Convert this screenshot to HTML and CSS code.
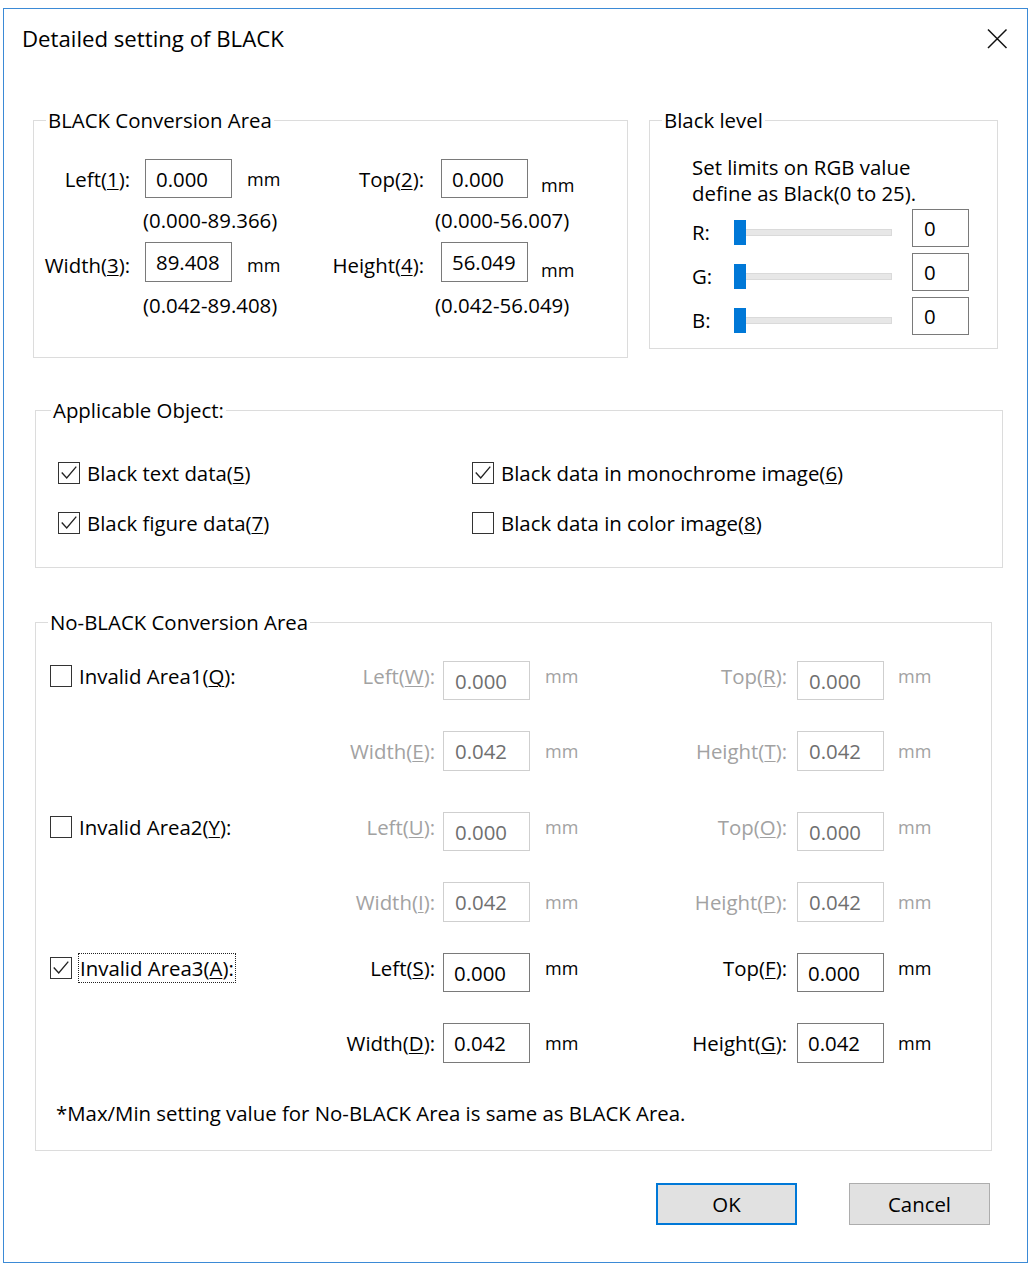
FILE: index.html
```html
<!DOCTYPE html>
<html>
<head>
<meta charset="utf-8">
<title>Detailed setting of BLACK</title>
<link rel="stylesheet" href="styles.css">
</head>
<body>
<div class="window">
  <div class="titlebar">
    <span class="title">Detailed setting of BLACK</span>
    <span class="close">
      <svg width="22" height="22" viewBox="0 0 22 22"><path d="M2 1.5 L20.5 20 M20.5 1.5 L2 20" stroke="#111" stroke-width="1.5" fill="none"/></svg>
    </span>
  </div>
  <div class="content">
    <div class="top-row">
      <fieldset class="group g-black">
        <legend>BLACK Conversion Area</legend>
        <div class="bc-grid">
          <span class="lbl r1">Left(<u>1</u>):</span>
          <span class="input">0.000</span>
          <span class="unit u1">mm</span>
          <span class="lbl r1 lr">Top(<u>2</u>):</span>
          <span class="input">0.000</span>
          <span class="unit u2">mm</span>

          <span class="range rg1">(0.000-89.366)</span>
          <span class="range rg2">(0.000-56.007)</span>

          <span class="lbl r3">Width(<u>3</u>):</span>
          <span class="input">89.408</span>
          <span class="unit u3">mm</span>
          <span class="lbl r3 lr">Height(<u>4</u>):</span>
          <span class="input">56.049</span>
          <span class="unit u4">mm</span>

          <span class="range rg1">(0.042-89.408)</span>
          <span class="range rg2">(0.042-56.049)</span>
        </div>
      </fieldset>
      <fieldset class="group g-level">
        <legend>Black level</legend>
        <p class="level-text">Set limits on RGB value<br>define as Black(0 to 25).</p>
        <div class="slider-grid">
          <span class="sl-lbl">R:</span>
          <span class="slider"><span class="track"></span><span class="thumb"></span></span>
          <span class="input small">0</span>
          <span class="sl-lbl">G:</span>
          <span class="slider"><span class="track"></span><span class="thumb"></span></span>
          <span class="input small">0</span>
          <span class="sl-lbl">B:</span>
          <span class="slider"><span class="track"></span><span class="thumb"></span></span>
          <span class="input small">0</span>
        </div>
      </fieldset>
    </div>

    <fieldset class="group g-apply">
      <legend>Applicable Object:</legend>
      <div class="apply-grid">
        <label class="chk"><span class="box"><svg viewBox="0 0 22 22"><path d="M3 10.5 L8.5 16.5 L19 4" stroke="#222" stroke-width="1.5" fill="none"/></svg></span><span>Black text data(<u>5</u>)</span></label>
        <label class="chk"><span class="box"><svg viewBox="0 0 22 22"><path d="M3 10.5 L8.5 16.5 L19 4" stroke="#222" stroke-width="1.5" fill="none"/></svg></span><span>Black data in monochrome image(<u>6</u>)</span></label>
        <label class="chk"><span class="box"><svg viewBox="0 0 22 22"><path d="M3 10.5 L8.5 16.5 L19 4" stroke="#222" stroke-width="1.5" fill="none"/></svg></span><span>Black figure data(<u>7</u>)</span></label>
        <label class="chk"><span class="box"></span><span>Black data in color image(<u>8</u>)</span></label>
      </div>
    </fieldset>

    <fieldset class="group g-noblack">
      <legend>No-BLACK Conversion Area</legend>

      <div class="area-grid">
        <label class="chk arow1"><span class="box"></span><span>Invalid Area1(<u>Q</u>):</span></label>
        <span class="lbl dis arow1">Left(<u>W</u>):</span>
        <span class="input dis">0.000</span>
        <span class="unit dis arow1 pad">mm</span>
        <span class="lbl dis arow1 pr2">Top(<u>R</u>):</span>
        <span class="input dis">0.000</span>
        <span class="unit dis arow1 pad2">mm</span>

        <span class="spacer"></span>
        <span class="lbl dis">Width(<u>E</u>):</span>
        <span class="input dis">0.042</span>
        <span class="unit dis pad">mm</span>
        <span class="lbl dis pr2">Height(<u>T</u>):</span>
        <span class="input dis">0.042</span>
        <span class="unit dis pad2">mm</span>
      </div>

      <div class="area-grid a2">
        <label class="chk arow1"><span class="box"></span><span>Invalid Area2(<u>Y</u>):</span></label>
        <span class="lbl dis arow1">Left(<u>U</u>):</span>
        <span class="input dis">0.000</span>
        <span class="unit dis arow1 pad">mm</span>
        <span class="lbl dis arow1 pr2">Top(<u>O</u>):</span>
        <span class="input dis">0.000</span>
        <span class="unit dis arow1 pad2">mm</span>

        <span class="spacer"></span>
        <span class="lbl dis">Width(<u>I</u>):</span>
        <span class="input dis">0.042</span>
        <span class="unit dis pad">mm</span>
        <span class="lbl dis pr2">Height(<u>P</u>):</span>
        <span class="input dis">0.042</span>
        <span class="unit dis pad2">mm</span>
      </div>

      <div class="area-grid a3">
        <label class="chk arow1"><span class="box"><svg viewBox="0 0 22 22"><path d="M3 10.5 L8.5 16.5 L19 4" stroke="#222" stroke-width="1.5" fill="none"/></svg></span><span class="focus">Invalid Area3(<u>A</u>):</span></label>
        <span class="lbl arow1">Left(<u>S</u>):</span>
        <span class="input">0.000</span>
        <span class="unit arow1 pad">mm</span>
        <span class="lbl arow1 pr2">Top(<u>F</u>):</span>
        <span class="input">0.000</span>
        <span class="unit arow1 pad2">mm</span>

        <span class="spacer"></span>
        <span class="lbl">Width(<u>D</u>):</span>
        <span class="input">0.042</span>
        <span class="unit pad">mm</span>
        <span class="lbl pr2">Height(<u>G</u>):</span>
        <span class="input">0.042</span>
        <span class="unit pad2">mm</span>
      </div>

      <p class="note">*Max/Min setting value for No-BLACK Area is same as BLACK Area.</p>
    </fieldset>

    <div class="buttons">
      <button class="btn default">OK</button>
      <button class="btn">Cancel</button>
    </div>
  </div>
</div>
</body>
</html>
```

FILE: styles.css
```css
* { box-sizing: border-box; }

html, body {
  margin: 0;
  padding: 0;
  background: #ffffff;
}

body {
  font-family: "Open Sans", "Noto Sans", sans-serif;
  font-size: 20.4px;
  color: #000;
  line-height: 28px;
}

u {
  text-decoration-thickness: 1px;
  text-underline-offset: 2px;
}

.window {
  margin: 8px 0 0 3px;
  width: 1025px;
  border: 1px solid #3b8ad6;
  background: #fff;
}

.titlebar {
  height: 60px;
  display: flex;
  align-items: center;
  justify-content: space-between;
  padding: 0 19px 0 18px;
}

.title {
  font-size: 22.2px;
}

.close {
  display: flex;
  width: 22px;
  height: 22px;
}

.content {
  padding: 37px 0 37px 29px;
}

.top-row {
  display: flex;
  align-items: flex-start;
  gap: 21px;
}

.group {
  margin: 0;
  padding: 0;
  border: 1px solid #dcdcdc;
  min-width: 0;
}

.group legend {
  padding: 0 2px;
  margin-left: 12px;
  line-height: 28px;
}

/* BLACK Conversion Area */
.g-black {
  width: 595px;
  height: 252px;
}

.bc-grid {
  display: grid;
  grid-template-columns: 111px 87px 95px 114px 87px 1fr;
  grid-template-rows: 39px 44px 40px 46px;
  padding-top: 25px;
}

.lbl {
  text-align: right;
  white-space: nowrap;
  align-self: center;
}

.bc-grid .lbl { padding-right: 15px; }
.bc-grid .lbl.lr { padding-right: 17px; }
.bc-grid .r3 { padding-top: 6px; }

.unit {
  font-size: 18px;
  align-self: center;
  white-space: nowrap;
}

.u1 { padding-left: 15px; }
.u2 { padding-left: 13px; padding-top: 12px; }
.u3 { padding-left: 15px; padding-top: 6px; }
.u4 { padding-left: 13px; padding-top: 16px; }

.range {
  white-space: nowrap;
  align-self: center;
}

.rg1 { grid-column: 2 / span 3; margin-left: -2px; }
.rg2 { grid-column: 5 / span 2; margin-left: -6px; }

.input {
  display: flex;
  align-items: center;
  height: 100%;
  border: 1px solid #7a7a7a;
  padding-left: 10px;
  background: #fff;
  white-space: nowrap;
}

/* Black level */
.g-level {
  width: 349px;
  height: 243px;
}

.level-text {
  margin: 0;
  padding: 20px 0 0 42px;
  line-height: 26px;
}

.slider-grid {
  display: grid;
  grid-template-columns: 42px 178px 57px;
  grid-auto-rows: 38px;
  row-gap: 6px;
  margin: 3px 0 0 42px;
}

.slider-grid .sl-lbl {
  align-self: center;
  padding-top: 8px;
}

.slider {
  position: relative;
  align-self: center;
  height: 25px;
  margin-top: 8px;
  margin-right: 20px;
}

.track {
  position: absolute;
  left: 0;
  right: 0;
  top: 9px;
  height: 7px;
  background: #e7e7e7;
  border: 1px solid #dadada;
}

.thumb {
  position: absolute;
  left: 0;
  top: 0;
  width: 12px;
  height: 25px;
  background: #0078d7;
}

.input.small { padding-left: 11px; }

/* Applicable */
.g-apply {
  margin-top: 38px;
  margin-left: 2px;
  width: 968px;
  height: 172px;
}

.g-apply legend { margin-left: 15px; }

.apply-grid {
  display: grid;
  grid-template-columns: 414px 1fr;
  grid-auto-rows: 40px;
  row-gap: 10px;
  padding: 29px 0 0 22px;
}

.chk {
  display: flex;
  align-items: center;
  gap: 7px;
  white-space: nowrap;
}

.box {
  flex: none;
  width: 22px;
  height: 22px;
  border: 1px solid #333;
  background: #fff;
  display: flex;
}

.box svg {
  width: 20px;
  height: 20px;
}

/* No-BLACK */
.g-noblack {
  margin-top: 40px;
  margin-left: 2px;
  width: 957px;
  height: 543px;
  padding-top: 25px;
}

.area-grid {
  display: grid;
  grid-template-columns: 250px 143px 87px 100px 167px 87px 1fr;
  grid-template-rows: 39px 40px;
  row-gap: 31px;
  padding-left: 14px;
}

.area-grid.a2 { margin-top: 41px; }
.area-grid.a3 { margin-top: 31px; }

.area-grid .lbl { padding-right: 8px; }
.area-grid .lbl.pr2 { padding-right: 10px; }
.area-grid .pad { padding-left: 15px; }
.area-grid .pad2 { padding-left: 14px; }

.area-grid .arow1 { padding-bottom: 10px; align-self: center; }

.dis { color: #a2a2a2; }
.input.dis {
  color: #6f6f6f;
  border-color: #cfcfcf;
  padding-left: 11px;
}

.focus {
  outline: 1px dotted #222;
  outline-offset: 0;
  padding: 0 1px;
  line-height: 28px;
}

.note {
  margin: 36px 0 0 20px;
}

/* Buttons */
.buttons {
  display: flex;
  justify-content: flex-end;
  gap: 52px;
  margin-top: 32px;
  padding-right: 37px;
}

.btn {
  width: 141px;
  height: 42px;
  font-family: inherit;
  font-size: 20.4px;
  color: #000;
  background: #e1e1e1;
  border: 1px solid #adadad;
  padding: 0;
  margin: 0;
}

.btn.default {
  border: 2px solid #0078d7;
}
```
